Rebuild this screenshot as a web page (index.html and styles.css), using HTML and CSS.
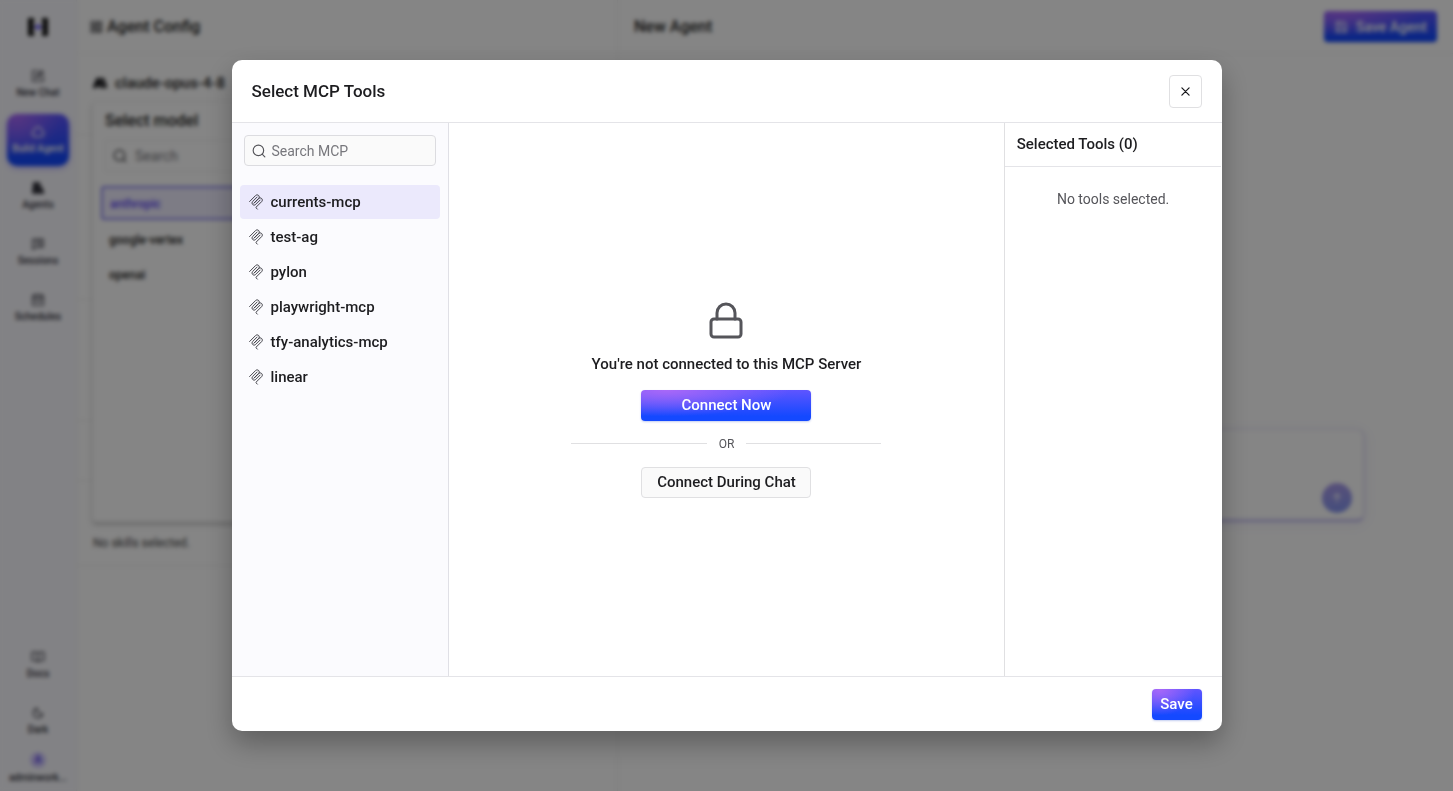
FILE: index.html
```html
<!DOCTYPE html>
<html lang="en">
<head>
    <meta charset="UTF-8">
    <meta name="viewport" content="width=device-width, initial-scale=1.0">
    <title>New Agent</title>
    <link rel="stylesheet" href="styles.css">
</head>
<body>

    <!-- Shared icons -->
    <svg class="icon-defs" aria-hidden="true">
        <symbol id="icon-mcp" viewBox="0 0 180 180">
            <path d="M18 84.85L85.88 16.97C95.25 7.6 110.45 7.6 119.82 16.97C129.2 26.34 129.2 41.54 119.82 50.91L68.56 102.18"/>
            <path d="M69.27 101.47L119.82 50.91C129.2 41.54 144.39 41.54 153.77 50.91L154.12 51.27C163.49 60.64 163.49 75.83 154.12 85.21L92.72 146.6C89.6 149.72 89.6 154.79 92.72 157.91L105.33 170.52"/>
            <path d="M102.85 33.94L52.65 84.15C43.28 93.52 43.28 108.71 52.65 118.09C62.02 127.46 77.22 127.46 86.59 118.09L136.79 67.88"/>
        </symbol>
        <symbol id="icon-search" viewBox="0 0 24 24">
            <circle cx="11" cy="11" r="9"/>
            <path d="M22 22l-4.600-4.600"/>
        </symbol>
    </svg>

    <div class="app">
        <!-- Sidebar -->
        <nav class="sidebar">
            <svg class="logo" viewBox="0 0 22 20">
                <path d="M1 1h6v5H5v8h2v5H1zM21 1h-6v5h2v8h-2v5h6zM5 6l3 4-3 4zM17 6l-3 4 3 4z" fill="#111"/>
                <path d="M7 10l4-3 4 3-4 3z" fill="#6a5cff"/>
            </svg>
            <a class="nav-item" href="#">
                <svg class="icon" viewBox="0 0 24 24"><path d="M12 3H3v18h18v-9M18 3l3 3-9 9H9v-3z"/></svg>
                New Chat
            </a>
            <a class="nav-item active" href="#">
                <svg class="icon" viewBox="0 0 24 24"><path d="M7 20a5 5 0 0 1-2-9.500a7 7 0 0 1 14 0A5 5 0 0 1 17 20z"/></svg>
                Build Agent
            </a>
            <a class="nav-item" href="#">
                <svg class="icon solid" viewBox="0 0 24 24"><path d="M4 3h11v8H4zM3 13h9v8H3zM14 13l4-3 4 11h-8z"/></svg>
                Agents
            </a>
            <a class="nav-item" href="#">
                <svg class="icon" viewBox="0 0 24 24"><path d="M3 4h18v13H9l-6 4zM8 8h4M8 12h4M16 4v13"/></svg>
                Sessions
            </a>
            <a class="nav-item" href="#">
                <svg class="icon" viewBox="0 0 24 24"><path d="M3 4h18v17H3zM3 10h18M8 2v4M16 2v4M8 15h8"/></svg>
                Schedules
            </a>
            <div class="nav-bottom">
                <a class="nav-item" href="#">
                    <svg class="icon" viewBox="0 0 24 24"><path d="M12 6v14M2 4h7l3 2 3-2h7v14h-7l-3 2-3-2H2z"/></svg>
                    Docs
                </a>
                <button class="nav-item" type="button">
                    <svg class="icon" viewBox="0 0 24 24"><path d="M11 4a7 7 0 0 0 9 9a8 8 0 1 1-9-9z"/></svg>
                    Dark
                </button>
                <a class="nav-item user" href="#">
                    <span class="avatar">A</span>
                    adminwork...
                </a>
            </div>
        </nav>

        <!-- Agent config -->
        <section class="config">
            <header class="panel-header">
                <svg class="icon" viewBox="0 0 24 24"><path d="M4 3h6v7H4zM4 14h6v7H4zM14 3h7v18h-7zM14 8h7M14 16h7"/></svg>
                <h2>Agent Config</h2>
            </header>
            <div class="config-row model-row">
                <svg class="icon solid" viewBox="0 0 24 24"><path d="M7 4h4l6 16h-4l-1-3H6l-1 3H0zM14 4h4l6 16h-4z"/></svg>
                <span>claude-opus-4-8</span>
                <div class="model-menu">
                    <h3>Select model</h3>
                    <label class="menu-search">
                        <svg class="icon"><use href="#icon-search"/></svg>
                        <input type="text" placeholder="Search" aria-label="Search models">
                    </label>
                    <ul>
                        <li class="selected">anthropic</li>
                        <li>google-vertex</li>
                        <li>openai</li>
                    </ul>
                </div>
            </div>
            <div class="config-row instructions"></div>
            <div class="config-row tools"></div>
            <div class="config-row subagents"></div>
            <div class="config-row skills">No skills selected.</div>
        </section>

        <!-- Chat preview -->
        <main class="chat">
            <header class="panel-header">
                <h2>New Agent</h2>
                <button class="btn primary save-agent" type="button">
                    <svg class="icon" viewBox="0 0 24 24"><path d="M4 3h13l4 4v14H4zM8 3v5h8M8 21v-7h9v7"/></svg>
                    Save Agent
                </button>
            </header>
            <div class="composer">
                <button class="send" type="button" aria-label="Send">
                    <svg class="icon" viewBox="0 0 24 24"><path d="M12 19V5M6 11l6-6 6 6"/></svg>
                </button>
            </div>
        </main>
    </div>

    <!-- MCP tools modal -->
    <div class="overlay">
        <div class="modal" role="dialog" aria-modal="true" aria-labelledby="modal-title">
            <header class="modal-header">
                <h1 id="modal-title">Select MCP Tools</h1>
                <button class="close" type="button" aria-label="Close">
                    <svg viewBox="0 0 10 10"><path d="M1 1l8 8M9 1l-8 8"/></svg>
                </button>
            </header>

            <div class="modal-body">
                <aside class="servers">
                    <label class="search-box">
                        <svg class="icon"><use href="#icon-search"/></svg>
                        <input type="text" placeholder="Search MCP" aria-label="Search MCP">
                    </label>
                    <div class="server-list">
                        <button class="server selected" type="button"><svg><use href="#icon-mcp"/></svg>currents-mcp</button>
                        <button class="server" type="button"><svg><use href="#icon-mcp"/></svg>test-ag</button>
                        <button class="server" type="button"><svg><use href="#icon-mcp"/></svg>pylon</button>
                        <button class="server" type="button"><svg><use href="#icon-mcp"/></svg>playwright-mcp</button>
                        <button class="server" type="button"><svg><use href="#icon-mcp"/></svg>tfy-analytics-mcp</button>
                        <button class="server" type="button"><svg><use href="#icon-mcp"/></svg>linear</button>
                    </div>
                </aside>

                <section class="connect">
                    <svg class="lock" viewBox="0 0 34 38">
                        <rect x="2" y="17" width="30" height="18" rx="3"/>
                        <path d="M8 17v-6a9 9 0 0 1 18 0v6"/>
                    </svg>
                    <p>You're not connected to this MCP Server</p>
                    <button class="btn primary" type="button">Connect Now</button>
                    <div class="divider">OR</div>
                    <button class="btn secondary" type="button">Connect During Chat</button>
                </section>

                <aside class="selected-tools">
                    <h2>Selected Tools (0)</h2>
                    <p>No tools selected.</p>
                </aside>
            </div>

            <footer class="modal-footer">
                <button class="btn primary" type="button">Save</button>
            </footer>
        </div>
    </div>

</body>
</html>
```
FILE: styles.css
```css
* {
    box-sizing: border-box;
}

body {
    margin: 0;
    font-family: Roboto, "Liberation Sans", sans-serif;
    font-size: 14px;
    line-height: 20px;
    color: #1d1d20;
    background-color: #fff;
}

h1, h2, h3, p, ul {
    margin: 0;
    padding: 0;
}

button, input {
    font: inherit;
    color: inherit;
}

button {
    cursor: pointer;
}

svg {
    flex-shrink: 0;
    fill: none;
    stroke: currentColor;
    stroke-width: 2;
    stroke-linecap: round;
    stroke-linejoin: round;
}

.icon-defs {
    display: none;
}

.icon {
    width: 14px;
    height: 14px;
}

.icon.solid {
    fill: currentColor;
}

/* Page behind the modal */
.app {
    display: flex;
    height: 100vh;
    overflow: hidden;
}

.sidebar {
    display: flex;
    flex-direction: column;
    align-items: center;
    gap: 4px;
    width: 77px;
    padding: 16px 0 0;
    background-color: #fafaff;
    border-right: 1px solid #f0f0f5;
}

.logo {
    width: 22px;
    height: 22px;
    margin-bottom: 16px;
    stroke: none;
}

.nav-item {
    display: flex;
    flex-direction: column;
    align-items: center;
    justify-content: center;
    gap: 2px;
    width: 62px;
    height: 52px;
    padding: 2px 0 0;
    border: none;
    border-radius: 10px;
    background: none;
    color: #33333c;
    font-size: 10px;
    font-weight: 500;
    line-height: 16px;
    text-decoration: none;
}

.nav-item.active {
    color: #fff;
    background: radial-gradient(ellipse at 15% 0, #a868f8, transparent 60%), linear-gradient(#5f55ff, #1449ff 85%);
    box-shadow: 0 2px 6px rgba(80, 60, 255, 0.4);
}

.nav-bottom {
    display: flex;
    flex-direction: column;
    gap: 4px;
    margin-top: auto;
}

.nav-item.user {
    height: 40px;
    padding: 0 0 4px;
}

.avatar {
    width: 16px;
    height: 16px;
    border-radius: 8px;
    background-color: #d0c8ff;
    color: #4a30e0;
    text-align: center;
}

.config {
    flex: 0 0 541px;
    border-right: 1px solid #f0f0f0;
}

.panel-header {
    display: flex;
    align-items: center;
    gap: 4px;
    height: 54px;
    padding: 0 16px 0 12px;
    border-bottom: 1px solid #f5f5f5;
}

.panel-header h2 {
    font-size: 16px;
    font-weight: 500;
}

.config-row {
    position: relative;
    padding: 0 16px;
    border-bottom: 1px solid #ececec;
}

.model-row {
    display: flex;
    gap: 8px;
    align-items: flex-start;
    height: 81px;
    padding-top: 19px;
    font-size: 15px;
    font-weight: 500;
}

.model-row > .icon {
    margin-top: 3px;
}

.instructions {
    height: 165px;
}

.tools {
    height: 121px;
}

.subagents {
    height: 60px;
}

.skills {
    height: 85px;
    padding-top: 52px;
    font-size: 12px;
    color: #444;
}

.model-menu {
    position: absolute;
    z-index: 1;
    top: 47px;
    left: 15px;
    width: 500px;
    height: 421px;
    padding: 8px;
    border: 1px solid #eee;
    border-radius: 4px;
    background-color: #fff;
    box-shadow: 0 3px 4px rgba(0, 0, 0, 0.2);
}

.model-menu h3 {
    padding: 1px 4px 9px;
    font-size: 16px;
    font-weight: 500;
}

.menu-search {
    display: flex;
    align-items: center;
    gap: 8px;
    height: 32px;
    margin: 0 4px 14px;
    padding: 0 7px;
    border: 1px solid #eee;
    font-size: 14px;
    font-weight: 400;
}

.menu-search input {
    border: none;
    background: none;
    padding: 0;
}

.model-menu ul {
    list-style: none;
    font-size: 12px;
    font-weight: 500;
}

.model-menu li {
    height: 35px;
    padding: 8px;
    line-height: 20px;
}

.model-menu li.selected {
    height: 34px;
    margin-bottom: 2px;
    padding: 6px 7px;
    border: 2px solid #8d86f0;
    border-radius: 3px;
    background-color: #efedff;
    color: #5b45f5;
}

.chat {
    display: flex;
    flex: 1;
    flex-direction: column;
}

.chat .panel-header {
    justify-content: space-between;
    padding-left: 16px;
}

.composer {
    display: flex;
    align-items: flex-end;
    justify-content: flex-end;
    width: 79%;
    height: 93px;
    margin: 375px auto 0;
    padding: 6px 11px;
    border: 1px solid #e4e0f5;
    border-right-width: 2px;
    border-bottom: 3px solid #c9c3f2;
    border-radius: 8px;
    box-shadow: 0 2px 12px rgba(110, 90, 220, 0.1);
}

.send {
    display: flex;
    align-items: center;
    justify-content: center;
    width: 30px;
    height: 30px;
    padding: 0;
    border: none;
    border-radius: 15px;
    background: linear-gradient(170deg, #ad9be8, #8094f0);
    color: #fff;
}

/* Buttons */
.btn {
    display: flex;
    align-items: center;
    justify-content: center;
    height: 31px;
    border: 1px solid transparent;
    border-radius: 4px;
    font-size: 15px;
    font-weight: 500;
}

.btn.primary {
    border: none;
    color: #fff;
    background: radial-gradient(ellipse at 15% 0, #a868f8, transparent 60%), linear-gradient(#5f55ff, #1449ff 85%);
    box-shadow: 0 1px 2px rgba(20, 60, 200, 0.25);
}

.btn.secondary {
    border-color: #e0e0e2;
    background-color: #fafafa;
}

.save-agent {
    gap: 8px;
    padding: 0 10px;
    font-size: 14px;
}

/* Modal */
.overlay {
    position: fixed;
    z-index: 10;
    top: 0;
    left: 0;
    display: flex;
    align-items: center;
    justify-content: center;
    width: 100%;
    height: 100%;
    background-color: rgba(0, 0, 0, 0.48);
    backdrop-filter: blur(2px);
}

.modal {
    display: flex;
    flex-direction: column;
    width: 90%;
    max-width: 990px;
    height: calc(100vh - 120px);
    overflow: hidden;
    border-radius: 10px;
    background-color: #fff;
    box-shadow: 0 12px 28px rgba(0, 0, 0, 0.3);
}

.modal-header {
    display: flex;
    align-items: center;
    justify-content: space-between;
    height: 63px;
    padding: 0 20px;
    border-bottom: 1px solid #e4e4e8;
}

.modal-header h1 {
    font-size: 17px;
    line-height: 24px;
    font-weight: 500;
}

.close {
    display: flex;
    align-items: center;
    justify-content: center;
    width: 33px;
    height: 33px;
    padding: 0;
    border: 1px solid #e0e0e2;
    border-radius: 4px;
    background-color: #fff;
}

.close svg {
    width: 9px;
    height: 9px;
    stroke-width: 1.4;
}

.modal-body {
    display: grid;
    flex: 1;
    grid-template-columns: 22% 56% 22%;
    min-height: 0;
}

.servers {
    padding: 12px 8px;
    border-right: 1px solid #e0e0e6;
    background-color: #fbfbfe;
}

.search-box {
    display: flex;
    align-items: center;
    gap: 6px;
    height: 31px;
    margin: 0 4px;
    padding: 0 7px;
    border: 1px solid #dcdce0;
    border-radius: 4px;
    background-color: #fafafa;
    color: #55555a;
}

.search-box input {
    flex: 1;
    min-width: 0;
    padding: 0;
    border: none;
    outline: none;
    background: none;
}

input::placeholder {
    color: #77777c;
    opacity: 1;
}

.server-list {
    display: flex;
    flex-direction: column;
    gap: 1px;
    margin-top: 19px;
}

.server {
    display: flex;
    align-items: center;
    gap: 7px;
    width: 100%;
    height: 34px;
    padding: 0 8px;
    border: none;
    border-radius: 4px;
    background: none;
    font-size: 15px;
    font-weight: 500;
}

.server.selected {
    background-color: #ebe9fc;
}

.server svg {
    width: 16px;
    height: 16px;
    color: #3c3c44;
    stroke-width: 11;
}

.connect {
    display: flex;
    flex-direction: column;
    align-items: center;
    justify-content: center;
}

.lock {
    width: 34px;
    height: 38px;
    color: #55555a;
    stroke-width: 3;
}

.connect p {
    margin: 14px 0 16px;
    font-size: 15px;
    font-weight: 500;
}

.connect .btn {
    width: 170px;
}

.divider {
    display: flex;
    align-items: center;
    gap: 12px;
    width: 310px;
    margin: 13px 0;
    color: #55555a;
    font-size: 12px;
}

.divider::before,
.divider::after {
    content: "";
    flex: 1;
    height: 1px;
    background-color: #e0e0e2;
}

.selected-tools {
    border-left: 1px solid #e0e0e2;
}

.selected-tools h2 {
    padding: 11px 12px 12px;
    border-bottom: 1px solid #e4e4e8;
    font-size: 15px;
    font-weight: 500;
}

.selected-tools p {
    padding: 22px 12px;
    color: #55555a;
    text-align: center;
}

.modal-footer {
    display: flex;
    align-items: center;
    justify-content: flex-end;
    height: 55px;
    padding: 0 20px;
    border-top: 1px solid #e4e4e8;
}

.modal-footer .btn {
    width: 50px;
    padding: 0;
}
```
